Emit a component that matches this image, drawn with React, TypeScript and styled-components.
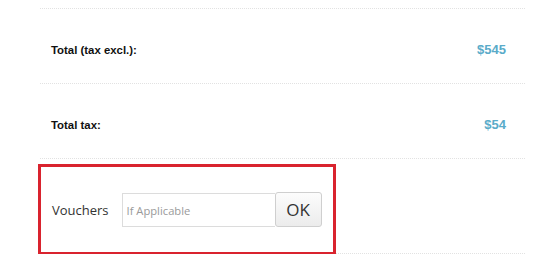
import React from 'react';
import styled, { createGlobalStyle } from 'styled-components';

const GlobalStyle = createGlobalStyle`
  body {
    margin: 0;
    background: #fff;
    font-family: "Open Sans", "Liberation Sans", Arial, sans-serif;
  }
`;

const Summary = styled.div`
  width: 485px;
  margin-left: 40px;
  padding-top: 8px;
`;

const Row = styled.div`
  display: flex;
  align-items: center;
  justify-content: space-between;
  box-sizing: border-box;
  height: 75px;
  padding: 7px 19px 0 11px;
  border-top: 1px dotted #e2e2e2;
`;

const Label = styled.span`
  font-family: "Liberation Sans", Arial, sans-serif;
  font-weight: bold;
  font-size: 11.4px;
  color: #111;
`;

const Price = styled.span`
  font-family: "Liberation Sans", Arial, sans-serif;
  font-weight: bold;
  font-size: 13px;
  color: #5aabc9;
`;

const VoucherRow = styled.div`
  position: relative;
  display: flex;
  align-items: center;
  box-sizing: border-box;
  height: 96px;
  padding: 8px 0 0 12px;
  border-top: 1px dotted #e2e2e2;
  border-bottom: 1px dotted #e2e2e2;
`;

const Highlight = styled.div`
  position: absolute;
  left: -2px;
  top: 5px;
  width: 298px;
  height: 91px;
  box-sizing: border-box;
  border: 3px solid #d9232e;
  pointer-events: none;
`;

const VoucherLabel = styled.label`
  font-size: 13px;
  color: #333;
  margin-right: 13px;
`;

const VoucherInput = styled.input`
  box-sizing: border-box;
  width: 153px;
  height: 34px;
  padding: 0 4px;
  border: 1px solid #dcdcdc;
  border-right: none;
  font-family: "Open Sans", "Liberation Sans", Arial, sans-serif;
  font-size: 11.2px;
  outline: none;
  &::placeholder {
    color: #9a9a9a;
  }
`;

const OkButton = styled.button`
  box-sizing: border-box;
  width: 47px;
  height: 35px;
  margin-top: -1px;
  border: 1px solid #cfcfcf;
  border-radius: 3px;
  background: linear-gradient(#fcfcfc, #ececec);
  font-family: "Open Sans", "Liberation Sans", Arial, sans-serif;
  font-size: 17px;
  color: #333;
  padding: 0;
`;

const App: React.FC = () => {
  return (
    <>
      <GlobalStyle />
      <Summary>
        <Row>
          <Label>Total (tax excl.):</Label>
          <Price>$545</Price>
        </Row>
        <Row>
          <Label>Total tax:</Label>
          <Price>$54</Price>
        </Row>
        <VoucherRow>
          <VoucherLabel>Vouchers</VoucherLabel>
          <VoucherInput placeholder="If Applicable" />
          <OkButton>OK</OkButton>
          <Highlight />
        </VoucherRow>
      </Summary>
    </>
  );
};

export default App;
